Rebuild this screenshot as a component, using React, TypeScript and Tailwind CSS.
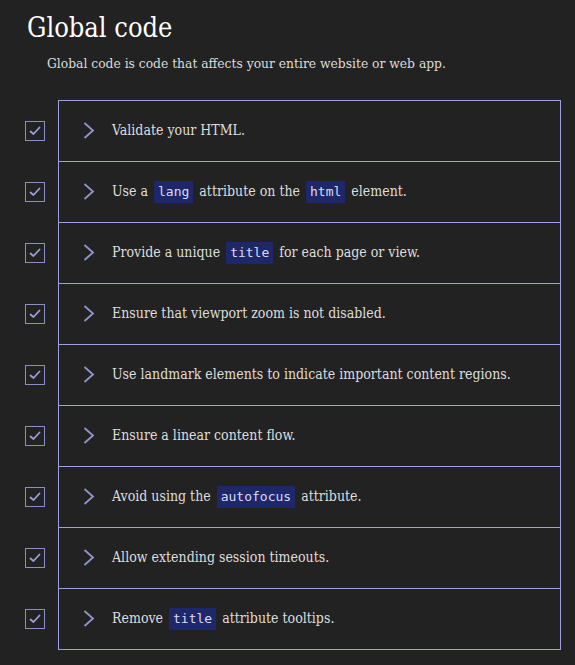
import React from 'react';

type Part = string | { code: string };

const items: Part[][] = [
  ['Validate your HTML.'],
  ['Use a ', { code: 'lang' }, ' attribute on the ', { code: 'html' }, ' element.'],
  ['Provide a unique ', { code: 'title' }, ' for each page or view.'],
  ['Ensure that viewport zoom is not disabled.'],
  ['Use landmark elements to indicate important content regions.'],
  ['Ensure a linear content flow.'],
  ['Avoid using the ', { code: 'autofocus' }, ' attribute.'],
  ['Allow extending session timeouts.'],
  ['Remove ', { code: 'title' }, ' attribute tooltips.'],
];

const Check = () => (
  <div className="w-5 h-5 shrink-0 border border-[#8a8fc6] flex items-center justify-center">
    <svg width="12" height="10" viewBox="0 0 12 10" fill="none">
      <path d="M1.5 5.5 L4.5 8 L10.5 1.5" stroke="#9a9fd6" strokeWidth="1.8" strokeLinecap="round" strokeLinejoin="round" />
    </svg>
  </div>
);

const Chevron = () => (
  <svg width="12" height="17" viewBox="0 0 12 17" fill="none" className="shrink-0">
    <path d="M1.5 1 L10 8.5 L1.5 16" stroke="#9096cc" strokeWidth="1.8" />
  </svg>
);

export default function App() {
  return (
    <div
      className="min-h-screen bg-[#222222] text-[#e2e2e2] pb-4 font-stretch-condensed"
      style={{ fontFamily: '"DejaVu Serif Condensed", "DejaVu Serif", serif' }}
    >
      <h1 className="text-[27px] leading-none text-white pl-[27px] pt-[14px]">Global code</h1>
      <p className="text-[13.7px] pl-[47px] mt-[12px] text-[#dcdcdc]">
        Global code is code that affects your entire website or web app.
      </p>
      <ul className="mt-[26px] pr-[14px]">
        {items.map((parts, i) => (
          <li key={i} className="flex items-stretch">
            <div className="w-[58px] pl-[25px] flex items-center pt-px">
              <Check />
            </div>
            <div
              className={
                'flex-1 h-[61px] flex items-center border-x border-t border-[#9ca1e2] pl-[24px] ' +
                (i === items.length - 1 ? 'border-b h-[62px]' : '')
              }
            >
              <Chevron />
              <span className="ml-[17px] text-[14px] text-[#dedede]">
                {parts.map((p, j) =>
                  typeof p === 'string' ? (
                    <React.Fragment key={j}>{p}</React.Fragment>
                  ) : (
                    <code
                      key={j}
                      className="inline-block bg-[#1f276b] text-[#d8dcf2] px-[4px] py-[3px] leading-4 text-[13px] mx-[2px] font-stretch-normal"
                      style={{ fontFamily: '"DejaVu Sans Mono", monospace' }}
                    >
                      {p.code}
                    </code>
                  )
                )}
              </span>
            </div>
          </li>
        ))}
      </ul>
    </div>
  );
}
